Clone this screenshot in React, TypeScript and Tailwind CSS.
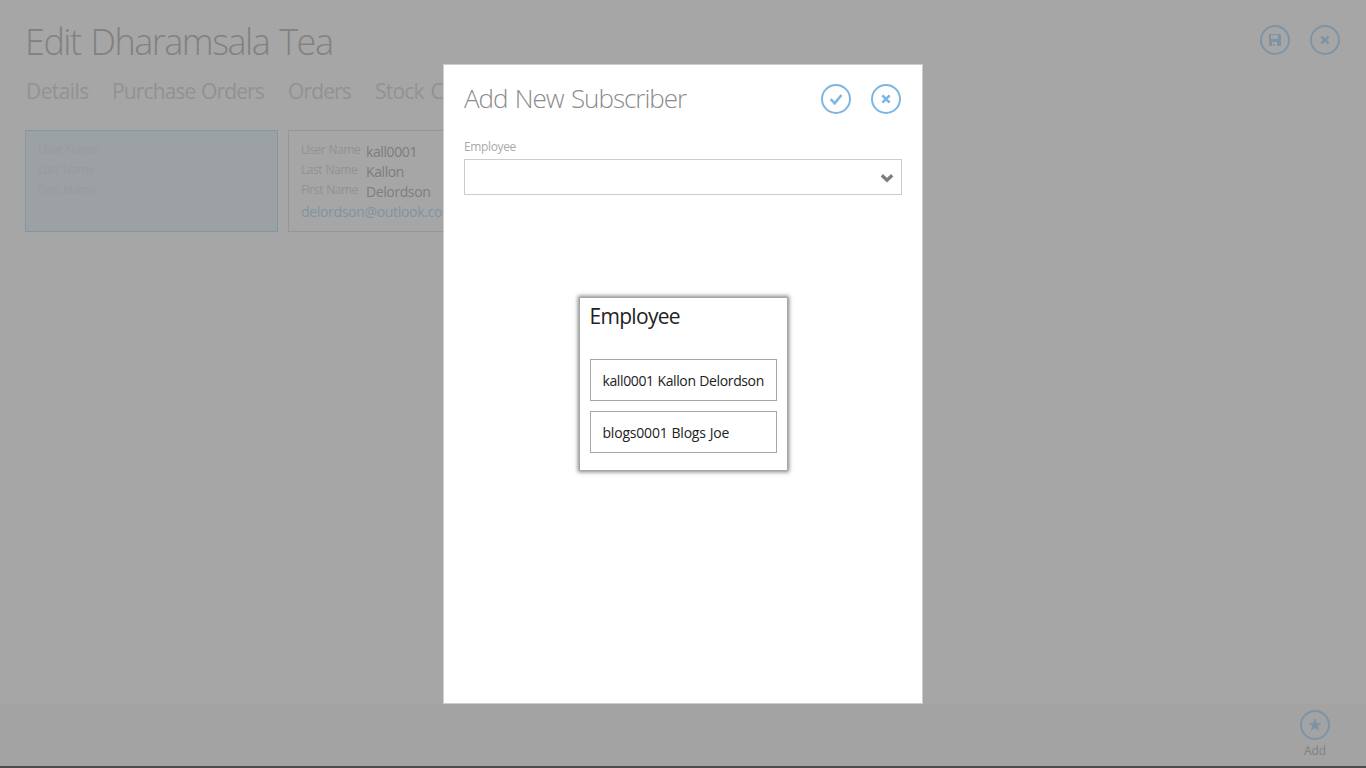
import React from "react";

function CircleButton({ children }: { children: React.ReactNode }) {
  return (
    <button className="block h-[30px] w-[30px]">
      <svg width="30" height="30" viewBox="0 0 30 30" fill="none">
        <circle cx="15" cy="15" r="14" stroke="currentColor" strokeWidth="2" />
        {children}
      </svg>
    </button>
  );
}

const Cross = () => <path d="M11.3 11.3L18.7 18.7M18.7 11.3L11.3 18.7" stroke="currentColor" strokeWidth="2.5" />;

function Field({ label, value }: { label: string; value: string }) {
  return (
    <div className="flex h-5">
      <span className="w-[65px] text-[12px] leading-[14px] tracking-[-0.43px] [word-spacing:0.5px] text-[#929292]">{label}</span>
      <span className="text-[14px] leading-[18px] tracking-[-0.4px] text-[#7d7d7d]">{value}</span>
    </div>
  );
}

const tabs = [
  { name: "Details", style: "w-[86px] tracking-[-0.6px]" },
  { name: "Purchase Orders", style: "w-[176px] tracking-[-0.88px] [word-spacing:1px]" },
  { name: "Orders", style: "w-[87px] tracking-[-0.88px]" },
  { name: "Stock C", style: "w-[150px] tracking-[-0.8px] [word-spacing:2px]" },
];

const employees = [
  { name: "kall0001 Kallon Delordson", style: "tracking-[-0.38px] [word-spacing:0.5px]" },
  { name: "blogs0001 Blogs Joe", style: "tracking-[-0.2px] [word-spacing:0.5px]" },
];

export default function App() {
  return (
    <div className="relative flex h-[768px] w-[1366px] flex-col overflow-hidden bg-[#a6a6a6] font-['Open_Sans','Noto_Sans',sans-serif] whitespace-nowrap">
      <header className="flex h-[78px] justify-between pt-[16px] pr-[26px] pl-[25px]">
        <h1 className="text-[36px] leading-[52px] font-light tracking-[-1.48px] [word-spacing:2px] text-[#818181]">Edit Dharamsala Tea</h1>
        <div className="flex gap-5 pt-[9px] text-[#7e94a4]">
          <CircleButton>
            <path fillRule="evenodd" fill="currentColor" d="M9 9h11l1 1v11H9zM11 10v4h7v-4zM12 17v4h1v-2h2v2h2v-4z" />
          </CircleButton>
          <CircleButton><Cross /></CircleButton>
        </div>
      </header>
      <nav className="flex h-[52px] pl-[26px] text-[21px] leading-[27px] text-[#929292]">
        {tabs.map((t) => <span key={t.name} className={t.style}>{t.name}</span>)}
      </nav>
      <main className="flex flex-1 items-start gap-[10px] pl-[25px]">
        <section className="h-[102px] w-[253px] border border-[#8296a4] bg-[#9ca1a4] px-3 pt-[12px] text-[12px] leading-5 tracking-[-0.43px] [word-spacing:0.5px] text-[#969ca0]">
          <div className="-mt-[3px]">User Name</div>
          <div>Last Name</div>
          <div>First Name</div>
        </section>
        <section className="h-[102px] w-[253px] border border-[#969696] px-3 pt-[12px]">
          <Field label="User Name" value="kall0001" />
          <Field label="Last Name" value="Kallon" />
          <Field label="First Name" value="Delordson" />
          <div className="text-[14px] leading-[18px] tracking-[-0.32px] text-[#7e94a4]">delordson@outlook.co</div>
        </section>
      </main>
      <footer className="flex h-[64px] justify-end border-b-2 border-[#4b4b4b] bg-[#a3a3a3] pt-[6px] pr-[36px]">
        <div className="flex flex-col items-center text-[#7e94a4]">
          <CircleButton>
            <path fill="currentColor" d="M15 8l1.8 4.9h5l-4 3 1.5 5.1-4.3-3.1-4.3 3.1 1.5-5.1-4-3h5z" />
          </CircleButton>
          <span className="text-[12px] leading-[22px] tracking-[-0.1px] text-[#818181]">Add</span>
        </div>
      </footer>

      <div role="dialog" className="absolute top-[64px] left-[443px] flex h-[640px] w-[480px] flex-col border border-[#cdcdcd] bg-white px-5 pt-[19px]">
        <div className="flex h-[55px] justify-between pr-[1px]">
          <h2 className="text-[26px] leading-[29px] font-light tracking-[-1px] [word-spacing:1.5px] text-[#8c8c8c]">Add New Subscriber</h2>
          <div className="flex gap-5 text-[#7cb6e2]">
            <CircleButton>
              <path d="M9.7 15.2l4 4.2L20.5 11" stroke="currentColor" strokeWidth="2.5" />
            </CircleButton>
            <CircleButton><Cross /></CircleButton>
          </div>
        </div>
        <label className="h-[20px] text-[12px] leading-[16px] tracking-[-0.36px] text-[#a9a9a9]">Employee</label>
        <div className="flex h-[36px] items-center justify-end border border-[#cdcdcd] pt-[2px] pr-[7px]">
          <svg width="14" height="10" viewBox="0 0 14 10" fill="none">
            <path d="M1.8 2.2L7 7.2l5.2-5" stroke="#7e7e7e" strokeWidth="3.3" />
          </svg>
        </div>
      </div>

      <div role="listbox" className="absolute top-[297px] left-[579px] h-[174px] w-[209px] border border-[#a6a6a6] bg-white px-[10px] pt-[4px] shadow-[0_0_4px_1px_rgba(0,0,0,0.5)]">
        <h3 className="-ml-[0.5px] h-[57px] text-[21px] leading-[29px] tracking-[-0.7px] text-[#222]">Employee</h3>
        <ul className="flex flex-col gap-[10px]">
          {employees.map(({ name, style }) => (
            <li key={name} role="option" className="h-[42px] border border-[#a6a6a6] pl-[11.5px] text-[14px] leading-[41px] text-[#222]"><span className={style}>{name}</span></li>
          ))}
        </ul>
      </div>
    </div>
  );
}
